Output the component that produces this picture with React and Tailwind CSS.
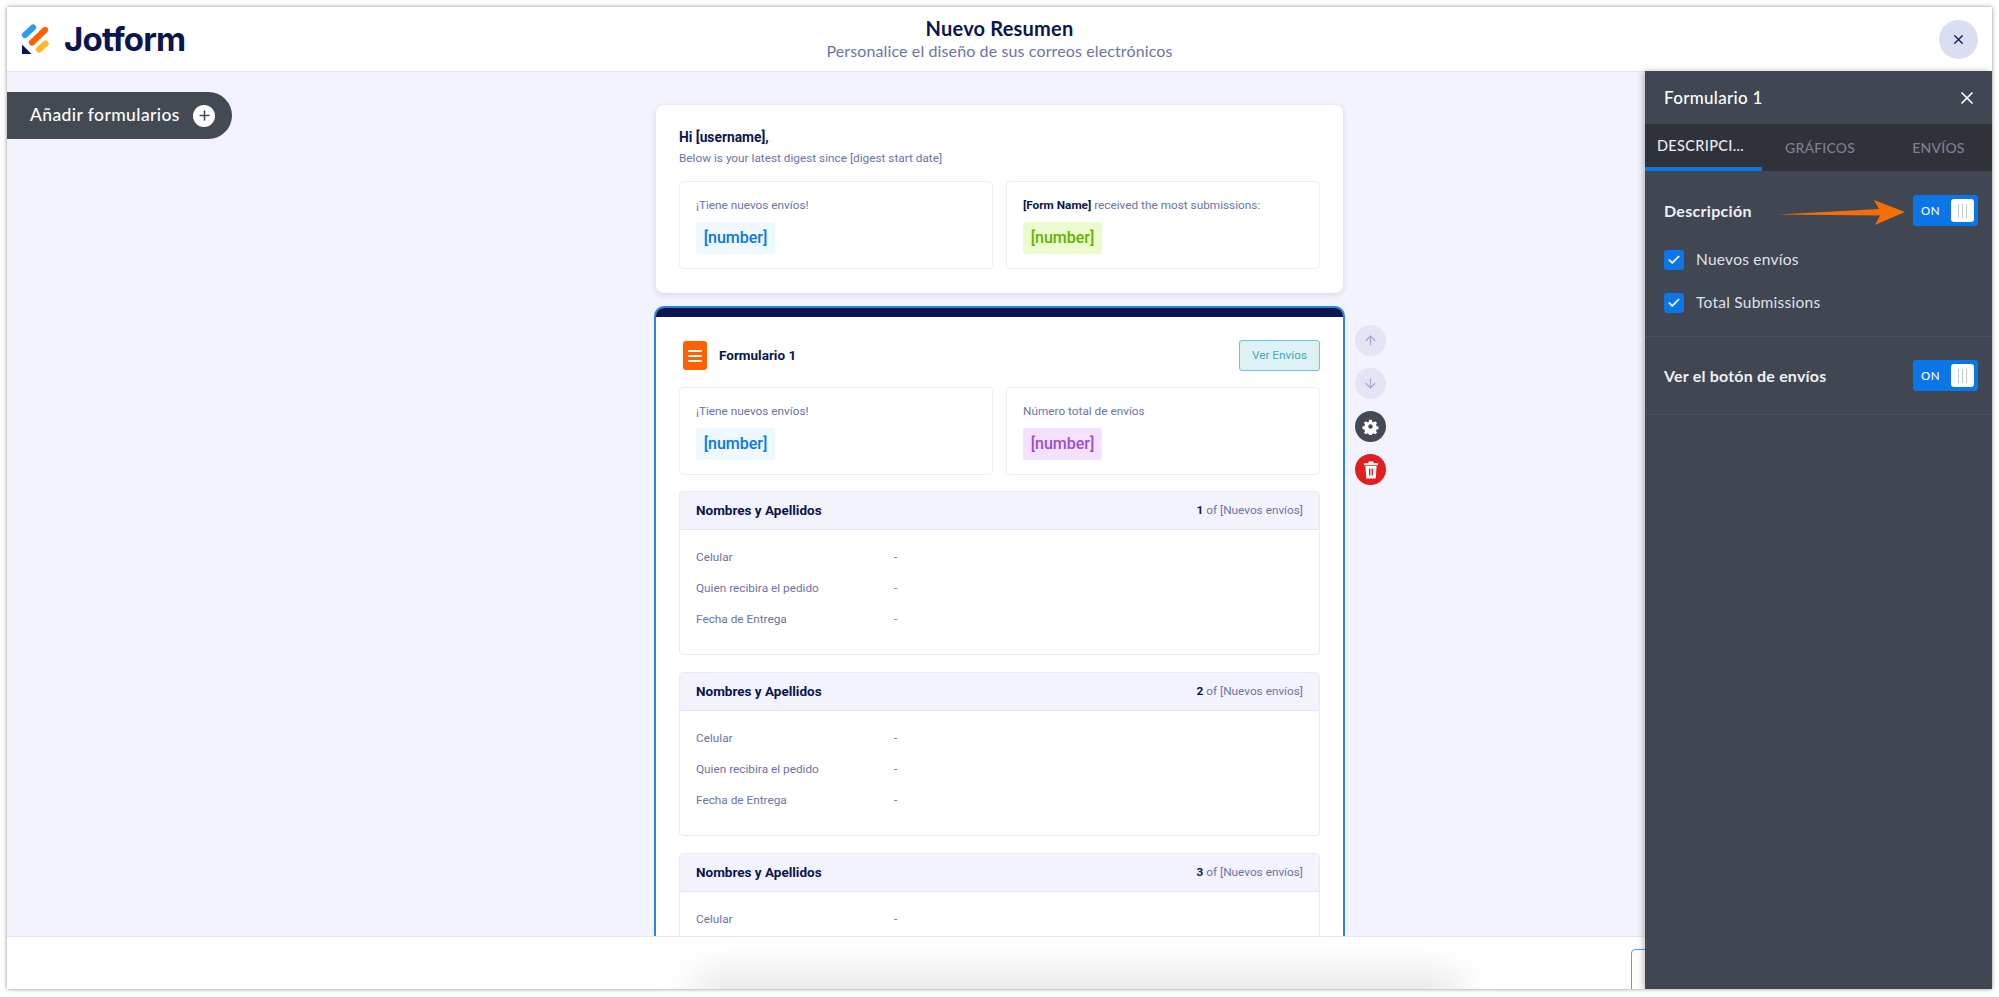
import React from "react";
import { ArrowUp, ArrowDown, Check, X, Plus } from "lucide-react";

const Chip = ({ cls, children }) => (
  <span className={`inline-flex h-[32px] w-[79px] items-center justify-center rounded-[3px] text-[16px] font-medium ${cls}`}>{children}</span>
);

const Stat = ({ label, chip, value = "[number]" }) => (
  <div className="flex h-[88px] flex-col rounded-[4px] border border-[#eceefb] bg-white pl-[16px] pt-[15px]">
    <div className="h-[25px] text-[11.8px] leading-[16px] text-[#6c73a8]">{label}</div>
    <Chip cls={chip}>{value}</Chip>
  </div>
);

const Toggle = () => (
  <div className="flex h-[31px] w-[65px] items-center justify-between rounded-[3px] bg-[#0a76e8] pl-[8px] pr-[4px]">
    <span className="text-[11.5px] font-medium tracking-[0.5px] text-white">ON</span>
    <span className="flex h-[23px] w-[23px] items-center justify-center gap-[3px] rounded-[3px] bg-white">
      <i className="h-[14px] w-px bg-[#c3c9dc]" />
      <i className="h-[14px] w-px bg-[#c3c9dc]" />
      <i className="h-[14px] w-px bg-[#c3c9dc]" />
    </span>
  </div>
);

const Section = ({ n, rows }) => (
  <div className="mb-[17px] h-[164px] shrink-0 overflow-hidden rounded-[4px] border border-[#e7e9f8] bg-white">
    <div className="flex h-[38px] items-center justify-between border-b border-[#e3e5f7] bg-[#f3f3fe] px-[16px]">
      <span className="text-[13.5px] font-bold text-[#0a1551]">Nombres y Apellidos</span>
      <span className="text-[11.8px] text-[#6c73a8]"><b className="font-bold text-[#0a1551]">{n}</b> of [Nuevos envíos]</span>
    </div>
    <div className="pt-[12px]">
      {rows.map((l) => (
        <div key={l} className="flex h-[31px] items-center px-[16px] text-[11.8px] text-[#6c73a8]">
          <span className="w-[198px]">{l}</span>
          <span>-</span>
        </div>
      ))}
    </div>
  </div>
);

const Round = ({ cls, children }) => (
  <div className={`flex h-[31px] w-[31px] items-center justify-center rounded-full ${cls}`}>{children}</div>
);

const Logo = () => (
  <svg width="28" height="30" viewBox="0 0 28 30" className="shrink-0">
    <g fill="none" strokeLinecap="round" strokeWidth="6.2">
      <path d="M4 11 L12 3.5" stroke="#2b9cf2" />
      <path d="M11 18.5 L24 6" stroke="#ff6100" />
      <path d="M18 25.5 L24.5 19.5" stroke="#ffb629" />
    </g>
    <path d="M1 20.5 V30 H10.5 Z" fill="#0a1551" />
  </svg>
);

const allRows = ["Celular", "Quien recibira el pedido", "Fecha de Entrega"];

export default function App() {
  return (
    <div className="h-[997px] w-full bg-white px-[7px] pb-[8px] pt-[7px] font-['Roboto',sans-serif]">
      <div className="relative flex h-full flex-col overflow-hidden bg-white shadow-[0_0_4px_rgba(0,0,0,0.45)]">
        <header className="flex h-[65px] shrink-0 items-center justify-between border-b border-[#e3e5f7] bg-white pl-[14px] pr-[14px] font-['Lato',sans-serif]">
          <div className="flex w-[300px] items-center gap-[15px]">
            <Logo />
            <span className="font-['Inter',sans-serif] text-[33px] font-bold leading-none tracking-[-0.8px] text-[#0a1551]">Jotform</span>
          </div>
          <div className="flex flex-col items-center">
            <span className="text-[20px] font-bold leading-[24px] tracking-[0.2px] text-[#0a1551]">Nuevo Resumen</span>
            <span className="text-[16px] leading-[22px] tracking-[0.12px] text-[#6c73a8]">Personalice el diseño de sus correos electrónicos</span>
          </div>
          <div className="flex w-[300px] justify-end">
            <div className="flex h-[39px] w-[39px] items-center justify-center rounded-full bg-[#dadef3] text-[#0a1551]">
              <X size={15} strokeWidth={2} />
            </div>
          </div>
        </header>

        <main className="flex min-h-0 flex-1 overflow-hidden border-b border-[#e3e5f7] bg-[#f3f3fe]">
          <div className="w-[647px] shrink-0 pt-[20px]">
            <button className="flex h-[47px] w-[225px] items-center justify-between rounded-r-full bg-[#434a54] pl-[23px] pr-[17px] font-['Lato',sans-serif] text-[17.5px] font-medium tracking-[0.4px] text-white">
              Añadir formularios
              <span className="flex h-[22px] w-[22px] items-center justify-center rounded-full bg-white text-[#434a54]">
                <Plus size={15} strokeWidth={2.5} />
              </span>
            </button>
          </div>

          <div className="w-[691px] shrink-0 pt-[33px]">
            <div className="mx-[2px] h-[188px] rounded-[8px] bg-white px-[23px] pt-[23px] shadow-[0_2px_6px_rgba(84,95,111,0.18)]">
              <div className="text-[13.8px] font-bold leading-[18px] text-[#0a1551]">Hi [username],</div>
              <div className="mt-[4px] text-[11.8px] leading-[16px] text-[#6c73a8]">Below is your latest digest since [digest start date]</div>
              <div className="mt-[15px] grid grid-cols-2 gap-[13px]">
                <Stat label="¡Tiene nuevos envíos!" chip="bg-[#edf8ff] text-[#0a76e8]" />
                <Stat label={<><b className="font-bold text-[#0a1551]">[Form Name]</b> received the most submissions:</>} chip="bg-[#ebfbce] text-[#64b200]" />
              </div>
            </div>

            <div className="mt-[13px] h-[700px] overflow-hidden rounded-t-[10px] border-x-2 border-t-2 border-[#2a83e6] bg-white">
              <div className="h-[9px] bg-[#0a1551]" />
              <div className="px-[23px]">
                <div className="flex h-[70px] items-center justify-between pt-[7px]">
                  <div className="flex items-center gap-[12px] pl-[4px]">
                    <span className="flex h-[29px] w-[24px] flex-col items-center justify-center gap-[3px] rounded-[3px] bg-[#ff6100]">
                      <i className="h-[2px] w-[14px] rounded bg-white" />
                      <i className="h-[2px] w-[14px] rounded bg-white" />
                      <i className="h-[2px] w-[14px] rounded bg-white" />
                    </span>
                    <span className="text-[13.5px] font-bold text-[#0a1551]">Formulario 1</span>
                  </div>
                  <span className="flex h-[31px] w-[81px] items-center justify-center rounded-[3px] border border-[#6fc2d3] bg-[#def2f5] text-[11.8px] text-[#45a9bb]">Ver Envíos</span>
                </div>
                <div className="grid grid-cols-2 gap-[13px]">
                  <Stat label="¡Tiene nuevos envíos!" chip="bg-[#edf8ff] text-[#0a76e8]" />
                  <Stat label="Número total de envíos" chip="bg-[#f3e2ff] text-[#9c4dd3]" />
                </div>
                <div className="mt-[16px]">
                  <Section n={1} rows={allRows} />
                  <Section n={2} rows={allRows} />
                  <Section n={3} rows={["Celular"]} />
                </div>
              </div>
            </div>
          </div>

          <div className="ml-[10px] flex flex-col gap-[12px] pt-[253px]">
            <Round cls="bg-[#e3e5f5] text-[#a2a8d2]"><ArrowUp size={15} strokeWidth={2} /></Round>
            <Round cls="bg-[#e3e5f5] text-[#a2a8d2]"><ArrowDown size={15} strokeWidth={2} /></Round>
            <Round cls="bg-[#434a54] text-white">
              <svg width="17" height="17" viewBox="0 0 24 24" fill="currentColor"><path fillRule="evenodd" d="M10 1.5h4l.6 3 2.3 1 2.6-1.7 2.8 2.8-1.7 2.6 1 2.3 3 .6v0l-.1 0h0v3.9l-2.9.6-1 2.3 1.7 2.6-2.8 2.8-2.6-1.7-2.3 1-.6 3h-4l-.6-3-2.3-1-2.6 1.7-2.8-2.8 1.7-2.6-1-2.3-3-.6v-4l3-.6 1-2.3-1.7-2.6 2.8-2.8 2.6 1.7 2.3-1zM12 8.5a3.5 3.5 0 1 0 0 7 3.5 3.5 0 0 0 0-7z" transform="translate(1.2 1.2) scale(.9)" /></svg>
            </Round>
            <Round cls="bg-[#e02020] text-white">
              <svg width="16" height="18" viewBox="0 0 16 18" fill="currentColor"><path fillRule="evenodd" d="M1 2.2h14v2H1zM5.5.6h5v1.6h-5zM2.4 5h11.2l-.9 12.4H3.3zM6 7.5v7h1.4v-7zM8.6 7.5v7H10v-7z" /></svg>
            </Round>
          </div>
        </main>

        <footer className="relative h-[52px] shrink-0 overflow-hidden bg-white">
          <div className="absolute bottom-[-8px] left-[700px] h-[6px] w-[740px] rounded-full shadow-[0_0_42px_14px_rgba(0,0,0,0.13)]" />
          <div className="absolute left-[1624px] top-[12px] h-[60px] w-[60px] rounded-[4px] border border-[#5b9de8]" />
        </footer>

        <aside className="absolute bottom-0 right-0 top-[64px] flex w-[347px] flex-col bg-[#404652] font-['Lato',sans-serif] shadow-[-2px_0_6px_rgba(0,0,0,0.25)]">
          <div className="flex h-[53px] shrink-0 items-center justify-between pl-[19px] pr-[15px]">
            <span className="text-[17px] font-medium tracking-[0.3px] text-white">Formulario 1</span>
            <X size={20} strokeWidth={2} className="text-white" />
          </div>
          <div className="flex h-[47px] shrink-0 bg-[#2f3238] text-[14px] font-medium tracking-[0.2px]">
            <div className="flex w-[117px] items-center justify-center border-b-[4px] border-[#0a76e8] pr-[6px] pt-[1px] text-[14.5px] tracking-[0.35px] text-[#e8eaf0]">DESCRIPCI...</div>
            <div className="flex w-[115px] items-center justify-center pl-[1px] text-[#7a818f]">GRÁFICOS</div>
            <div className="flex w-[115px] items-center justify-center pl-[8px] text-[#7a818f]">ENVÍOS</div>
          </div>
          <div className="h-[166px] shrink-0 border-b border-[#4a525e] pl-[19px] pr-[14px] pt-[24px]">
            <div className="flex h-[31px] items-center justify-between">
              <span className="text-[16px] font-bold tracking-[0.3px] text-[#eef0f4]">Descripción</span>
              <Toggle />
            </div>
            <div className="mt-[24px] flex flex-col gap-[23px]">
              {["Nuevos envíos", "Total Submissions"].map((t) => (
                <div key={t} className="flex h-[20px] items-center gap-[12px]">
                  <span className="flex h-[20px] w-[20px] items-center justify-center rounded-[3px] bg-[#0a76e8]"><Check size={14} strokeWidth={3} className="text-white" /></span>
                  <span className="text-[15.5px] tracking-[0.25px] text-[#dfe2e8]">{t}</span>
                </div>
              ))}
            </div>
          </div>
          <div className="flex h-[78px] shrink-0 items-center justify-between border-b border-[#4a525e] pl-[19px] pr-[14px]">
            <span className="text-[16px] font-bold tracking-[0.2px] text-[#eef0f4]">Ver el botón de envíos</span>
            <Toggle />
          </div>
          <svg width="132" height="26" viewBox="0 0 132 26" className="absolute left-[132px] top-[128px]">
            <path d="M0 15.5 L102 10 L97 1 L128 13 L98 26 L103 16.5 Z" fill="#f26f05" />
          </svg>
        </aside>
      </div>
    </div>
  );
}
